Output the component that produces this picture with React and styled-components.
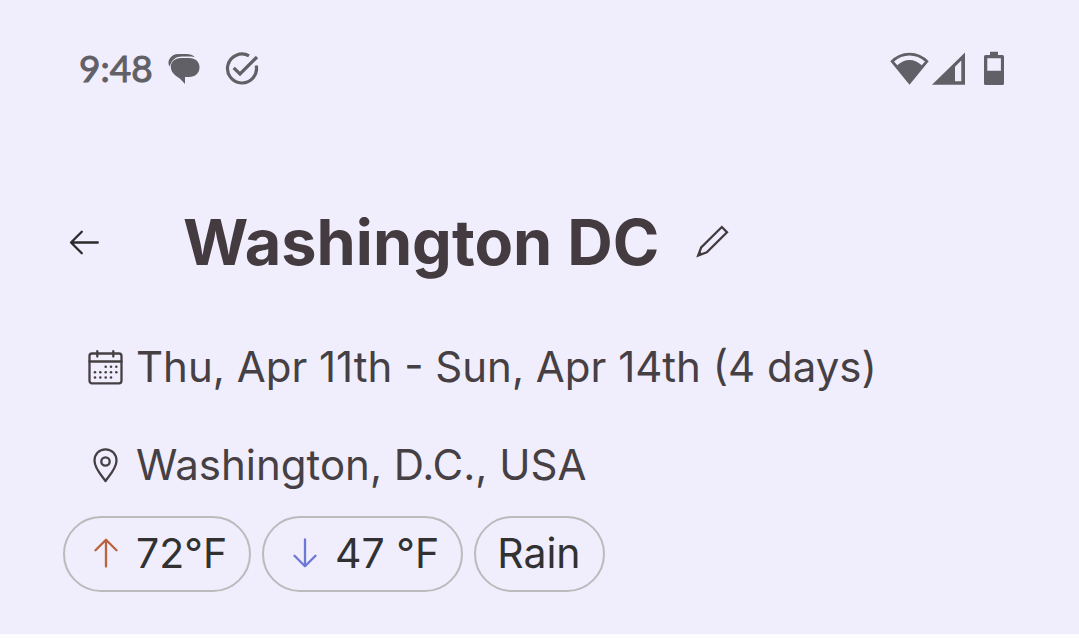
import React from "react";
import styled, { createGlobalStyle } from "styled-components";

const GlobalStyle = createGlobalStyle`
  * { box-sizing: border-box; }
  body {
    margin: 0;
    background: #fdfcff;
    font-family: Inter, "Liberation Sans", sans-serif;
  }
`;

const Screen = styled.main`
  background: #f0eefc;
  padding: 48px 63px 42px;
`;

const StatusBar = styled.div`
  display: flex;
  align-items: flex-start;
  justify-content: space-between;
  height: 42px;
  padding: 0 12px 0 16px;
  color: #616066;
`;

const StatusGroup = styled.div`
  display: flex;
  align-items: center;
  gap: ${(p) => p.$gap}px;
  height: ${(p) => p.$height}px;
`;

const Clock = styled.time`
  font-family: Lato, "Liberation Sans", sans-serif;
  font-size: 37px;
  line-height: 40px;
  -webkit-text-stroke: 1px currentColor;
  padding-bottom: 2px;
  margin-right: -10px;
`;

const Icon = styled.svg`
  display: block;
  flex: none;
`;

const Header = styled.header`
  display: flex;
  align-items: center;
  margin-top: 112px;
  height: 80px;
`;

const IconButton = styled.button`
  display: flex;
  flex: none;
  align-items: center;
  padding: 6px;
  border: 0;
  background: none;
  color: ${(p) => p.$color};
  cursor: pointer;
`;

const Title = styled.h1`
  margin: 0 30px 0 78px;
  color: #433b3f;
  font-size: 63px;
  font-weight: 700;
  line-height: 80px;
  white-space: nowrap;
`;

const Details = styled.div`
  display: flex;
  flex-direction: column;
  gap: 46px;
  margin-top: 59px;
`;

const DetailRow = styled.div`
  display: flex;
  align-items: center;
  height: 52px;
  color: #463f43;
  font-size: 42px;
  line-height: 52px;
  white-space: nowrap;
`;

const IconSlot = styled.span`
  display: flex;
  flex: none;
  justify-content: center;
  width: ${(p) => p.$width}px;
  padding-left: ${(p) => p.$inset}px;
`;

const ChipList = styled.ul`
  display: flex;
  gap: 11px;
  margin: 25px 0 0;
  padding: 0;
  list-style: none;
`;

const Chip = styled.li`
  display: flex;
  align-items: center;
  height: 76px;
  padding: 0 22px 2px ${(p) => (p.$icon ? 0 : 21)}px;
  border: 2px solid #bbbabd;
  border-radius: 38px;
  color: #323132;
  font-size: 41px;
  line-height: 52px;
  white-space: nowrap;
`;

const stroke = {
  fill: "none",
  stroke: "currentColor",
  strokeWidth: 2.3,
  strokeLinecap: "round",
  strokeLinejoin: "round",
};

const MessageIcon = () => (
  <Icon width="32" height="32" viewBox="0 0 32 32" fill="currentColor" aria-hidden="true">
    <path d="M1.800 13.500C.2 11.700 0 8.600 1.300 6.200C3.200 2.700 6.500 1 10.500 1H18.500C22 1 24.800 2 26.800 4.200C24.700 3.600 22.500 3.500 20.500 3.500H14C8 3.500 3.500 6.500 1.800 13.500Z" />
    <path d="M12.800 5H21C27.500 5 31.500 8.800 31.500 14.300C31.500 20 27.500 24 21 24H17V31L11.800 25.600C6.500 22.300 2.800 19 2.800 13.800C2.800 8.800 7 5 12.800 5Z" />
  </Icon>
);

const TaskIcon = () => (
  <Icon width="34" height="34" viewBox="0 0 34 34" fill="none" stroke="currentColor" strokeWidth="3.200" aria-hidden="true">
    <path d="M24 3.800A14.500 14.500 0 1 0 31.200 13.500" />
    <path d="M8.700 15.800L15 22L32 5" />
  </Icon>
);

const WifiIcon = () => (
  <Icon width="39" height="33" viewBox="0 0 39 33" fill="currentColor" fillRule="evenodd" aria-hidden="true">
    <path d="M.3 9.200A26 26 0 0 1 38.700 9.200L19.500 32.700ZM4 9.500A22.700 22.700 0 0 1 35 9.500L31.700 13.200A17 17 0 0 0 7.300 13.200Z" />
  </Icon>
);

const SignalIcon = () => (
  <Icon width="33" height="33" viewBox="0 0 33 33" fill="currentColor" fillRule="evenodd" aria-hidden="true">
    <path d="M0 32.700L33 .5V32.700ZM23 14.800V29.300H29.300V8.500Z" />
  </Icon>
);

const BatteryIcon = () => (
  <Icon width="20" height="34" viewBox="0 0 20 34" fill="currentColor" fillRule="evenodd" aria-hidden="true">
    <path d="M6 .7H14V4H18.500Q20 4 20 5.500V32.500Q20 34 18.500 34H1.500Q0 34 0 32.500V5.500Q0 4 1.500 4H6ZM3.300 7.200V19.700H16.900V7.200Z" />
  </Icon>
);

const BackIcon = () => (
  <Icon width="30" height="26" viewBox="0 0 30 26" {...stroke} aria-hidden="true">
    <path d="M28.800 13.500H2.200M12.800 2.700L2 13.500L12.800 24.300" />
  </Icon>
);

const PencilIcon = () => (
  <Icon width="34" height="34" viewBox="0 0 34 34" {...stroke} strokeLinejoin="miter" aria-hidden="true">
    <path d="M26.800 2L32 7.200L11.800 27.200L3.200 30.500L6.200 22.400Z" />
    <path d="M2 31.500L4.300 25.800L7.700 29.200Z" fill="currentColor" stroke="none" />
  </Icon>
);

const dots = [
  [17.7, 17.3], [23, 17.3], [28.3, 17.3],
  [7, 22.7], [12.3, 22.7], [17.7, 22.7], [23, 22.7], [28.3, 22.7],
  [7, 28], [12.3, 28], [17.7, 28], [23, 28],
];

const CalendarIcon = () => (
  <Icon width="35" height="36" viewBox="0 0 35 36" {...stroke} aria-hidden="true">
    <rect x="1.500" y="4.500" width="32" height="29.800" rx="2.500" />
    <path d="M1.500 12.500H33.500M9.300 2.200V7.500M25.300 2.200V7.500" />
    {dots.map(([x, y]) => (
      <circle key={`${x}-${y}`} cx={x} cy={y + 0.5} r="1.300" fill="currentColor" stroke="none" />
    ))}
  </Icon>
);

const PinIcon = () => (
  <Icon width="25" height="35" viewBox="0 0 25 35" {...stroke} aria-hidden="true">
    <path d="M12.500 33C9.500 28.500 1.500 20.500 1.500 12.700C1.500 6 6.200 1.300 12.500 1.300S23.500 6 23.500 12.700C23.500 20.500 15.500 28.500 12.500 33Z" />
    <circle cx="12.500" cy="13.500" r="4.200" />
  </Icon>
);

const UpIcon = () => (
  <Icon width="24" height="30" viewBox="0 0 24 30" {...stroke} color="#b9623e" aria-hidden="true">
    <path d="M12 28.500V1.800M1.500 12.200L12 1.700L22.500 12.200" />
  </Icon>
);

const DownIcon = () => (
  <Icon width="24" height="30" viewBox="0 0 24 30" {...stroke} color="#6c77d6" aria-hidden="true">
    <path d="M12 1.500V28.200M1.500 17.800L12 28.300L22.500 17.800" />
  </Icon>
);

export default function App() {
  return (
    <>
      <GlobalStyle />
      <Screen>
        <StatusBar>
          <StatusGroup $gap={25} $height={42}>
            <Clock>9:48</Clock>
            <MessageIcon />
            <TaskIcon />
          </StatusGroup>
          <StatusGroup $gap={19} $height={40}>
            <StatusGroup $gap={3} $height={38}>
              <WifiIcon />
              <SignalIcon />
            </StatusGroup>
            <BatteryIcon />
          </StatusGroup>
        </StatusBar>

        <Header>
          <IconButton type="button" aria-label="Back" $color="#2d2a2c">
            <BackIcon />
          </IconButton>
          <Title>Washington DC</Title>
          <IconButton type="button" aria-label="Edit trip" $color="#433b3f">
            <PencilIcon />
          </IconButton>
        </Header>

        <Details>
          <DetailRow>
            <IconSlot $width={73} $inset={12}>
              <CalendarIcon />
            </IconSlot>
            Thu, Apr 11th - Sun, Apr 14th (4 days)
          </DetailRow>
          <DetailRow>
            <IconSlot $width={73} $inset={12}>
              <PinIcon />
            </IconSlot>
            Washington, D.C., USA
          </DetailRow>
        </Details>

        <ChipList>
          <Chip $icon>
            <IconSlot $width={71} $inset={10}>
              <UpIcon />
            </IconSlot>
            72°F
          </Chip>
          <Chip $icon>
            <IconSlot $width={71} $inset={10}>
              <DownIcon />
            </IconSlot>
            47 °F
          </Chip>
          <Chip>Rain</Chip>
        </ChipList>
      </Screen>
    </>
  );
}
